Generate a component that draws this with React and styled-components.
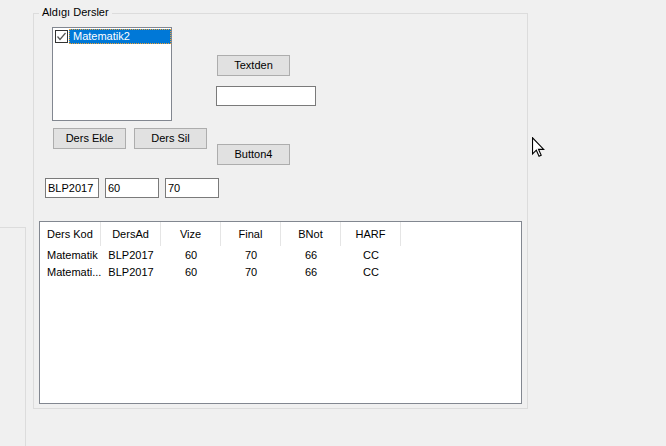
import React from "react";
import styled, { createGlobalStyle } from "styled-components";

const GlobalStyle = createGlobalStyle`
  html, body { margin: 0; padding: 0; background: #f0f0f0; }
  body {
    font-family: "Liberation Sans", Arial, sans-serif;
    font-size: 11px;
    color: #000;
  }
`;

const Window = styled.div`
  position: relative;
  display: flex;
  align-items: flex-start;
  width: 666px;
  height: 446px;
  overflow: hidden;
  background: #f0f0f0;
`;

const SidePanel = styled.div`
  flex-shrink: 0;
  margin-top: 227px;
  width: 26px;
  height: 219px;
  box-sizing: border-box;
  border-top: 1px solid #dcdcdc;
  border-right: 1px solid #dcdcdc;
`;

const GroupBox = styled.section`
  position: relative;
  flex-shrink: 0;
  margin: 13px 0 0 7px;
  width: 495px;
  height: 396px;
  box-sizing: border-box;
  border: 1px solid #dcdcdc;
  padding: 13px 0 0 5px;
  display: flex;
  flex-direction: column;
  align-items: flex-start;
`;

const GroupTitle = styled.span`
  position: absolute;
  top: -8px;
  left: 5px;
  padding: 0 3px;
  line-height: 13px;
  background: #f0f0f0;
  white-space: nowrap;
`;

const TopSection = styled.div`
  display: flex;
  align-items: flex-start;
  margin-left: 13px;
`;

const LeftCol = styled.div`
  display: flex;
  flex-direction: column;
`;

const CheckedList = styled.div`
  width: 120px;
  height: 94px;
  box-sizing: border-box;
  border: 1px solid #828790;
  background: #fff;
  padding: 1px 0 0 2px;
`;

const ListItem = styled.div`
  display: flex;
  align-items: center;
  height: 15px;
`;

const CheckBox = styled.span`
  display: flex;
  align-items: center;
  justify-content: center;
  width: 13px;
  height: 13px;
  box-sizing: border-box;
  border: 1px solid #333;
  background: #fff;
  margin-right: 1px;
  flex-shrink: 0;
`;

const ItemLabel = styled.span`
  flex: 1;
  height: 15px;
  box-sizing: border-box;
  padding-left: 3px;
  line-height: 13px;
  color: ${(p) => (p.$selected ? "#fff" : "#000")};
  background: ${(p) => (p.$selected ? "#0078d7" : "transparent")};
  border: 1px dotted ${(p) => (p.$selected ? "#f0a030" : "transparent")};
  white-space: nowrap;
`;

const ButtonRow = styled.div`
  display: flex;
  gap: 8px;
  margin-top: 7px;
  padding-left: 1px;
`;

const Button = styled.button`
  width: 73px;
  height: 21px;
  box-sizing: border-box;
  margin: 0;
  margin-left: ${(p) => p.$indent || 0}px;
  margin-top: ${(p) => p.$top || 0}px;
  padding: 0;
  border: 1px solid #adadad;
  background: #e1e1e1;
  font-family: "Liberation Sans", Arial, sans-serif;
  font-size: 11px;
  color: #000;
  line-height: 19px;
`;

const RightCol = styled.div`
  display: flex;
  flex-direction: column;
  align-items: flex-start;
  margin-left: 9px;
`;

const TextBox = styled.input`
  width: ${(p) => p.$w}px;
  height: 20px;
  box-sizing: border-box;
  margin: 0;
  margin-top: ${(p) => p.$top || 0}px;
  padding: 0 0 0 2px;
  border: 1px solid #7a7a7a;
  background: #fff;
  font-family: "Liberation Sans", Arial, sans-serif;
  font-size: 11px;
  color: #000;
  outline: none;
`;

const InputRow = styled.div`
  display: flex;
  gap: 6px;
  margin: 13px 0 0 6px;
`;

const ListView = styled.div`
  margin-top: 23px;
  width: 483px;
  height: 183px;
  box-sizing: border-box;
  border: 1px solid #828790;
  background: #fff;
`;

const GridRow = styled.div`
  display: grid;
  grid-template-columns: repeat(6, 60px);
  padding-left: 1px;
  height: ${(p) => p.$h}px;
`;

const HeaderCell = styled.div`
  box-sizing: border-box;
  border-right: 1px solid #e5e5e5;
  display: flex;
  align-items: center;
  justify-content: ${(p) => (p.$left ? "flex-start" : "center")};
  padding-left: ${(p) => (p.$left ? 6 : 0)}px;
  white-space: nowrap;
`;

const Cell = styled.div`
  display: flex;
  align-items: center;
  justify-content: ${(p) => (p.$left ? "flex-start" : "center")};
  padding-left: ${(p) => (p.$left ? 6 : 0)}px;
  white-space: nowrap;
  overflow: hidden;
`;

const Cursor = styled.svg`
  position: absolute;
  left: 532px;
  top: 137px;
`;

const headers = ["Ders Kod", "DersAd", "Vize", "Final", "BNot", "HARF"];
const rows = [
  ["Matematik", "BLP2017", "60", "70", "66", "CC"],
  ["Matemati...", "BLP2017", "60", "70", "66", "CC"],
];

export default function App() {
  return (
    <>
      <GlobalStyle />
      <Window>
        <SidePanel />
        <GroupBox>
          <GroupTitle>Aldıgı Dersler</GroupTitle>
          <TopSection>
            <LeftCol>
              <CheckedList>
                <ListItem>
                  <CheckBox>
                    <svg width="11" height="11" viewBox="0 0 11 11">
                      <polyline
                        points="1.5,5.5 4,8.5 9.5,2"
                        fill="none"
                        stroke="#555"
                        strokeWidth="1.2"
                      />
                    </svg>
                  </CheckBox>
                  <ItemLabel $selected>Matematik2</ItemLabel>
                </ListItem>
              </CheckedList>
              <ButtonRow>
                <Button>Ders Ekle</Button>
                <Button>Ders Sil</Button>
              </ButtonRow>
            </LeftCol>
            <RightCol>
              <Button $indent={1} $top={28}>Textden</Button>
              <TextBox $w={100} $top={10} readOnly defaultValue="" />
              <Button $indent={1} $top={38}>Button4</Button>
            </RightCol>
          </TopSection>
          <InputRow>
            <TextBox $w={54} readOnly defaultValue="BLP2017" />
            <TextBox $w={54} readOnly defaultValue="60" />
            <TextBox $w={54} readOnly defaultValue="70" />
          </InputRow>
          <ListView>
            <GridRow $h={24}>
              {headers.map((h, i) => (
                <HeaderCell key={h} $left={i === 0}>{h}</HeaderCell>
              ))}
            </GridRow>
            {rows.map((r, ri) => (
              <GridRow key={ri} $h={17}>
                {r.map((c, i) => (
                  <Cell key={i} $left={i === 0}>{c}</Cell>
                ))}
              </GridRow>
            ))}
          </ListView>
        </GroupBox>
        <Cursor width="13" height="21" viewBox="0 0 12 19">
          <path
            d="M0.5 0.5 L0.5 15.5 L4 12 L6.5 17.5 L8.5 16.6 L6 11.2 L10.8 11.2 Z"
            fill="#fff"
            stroke="#000"
            strokeWidth="1"
            strokeLinejoin="miter"
          />
        </Cursor>
      </Window>
    </>
  );
}
